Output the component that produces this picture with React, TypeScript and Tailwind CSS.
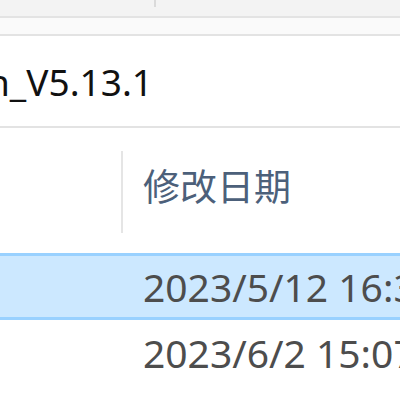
import React from "react";

export default function App() {
  const font = { fontFamily: '"Noto Sans", "Noto Sans CJK SC", sans-serif' };
  return (
    <div className="w-[400px] h-[400px] overflow-hidden bg-white flex flex-col" style={font}>
      <div className="h-[16px] bg-[#f3f3f3] flex shrink-0">
        <div className="w-[154px]" />
        <div className="w-[2px] h-[7px] bg-[#dadada]" />
      </div>
      <div className="h-[2px] bg-[#e3e3e3] shrink-0" />
      <div className="h-[16px] bg-[#fafafa] shrink-0" />
      <div className="h-[2px] bg-[#e3e3e3] shrink-0" />
      <div className="h-[90px] shrink-0 flex items-center overflow-hidden">
        <span className="ml-[-13px] text-[37px] leading-none text-[#111111] whitespace-nowrap">
          n_V5.13.1
        </span>
      </div>
      <div className="h-[2px] bg-[#e3e3e3] shrink-0" />
      <div className="h-[125px] shrink-0 flex">
        <div className="w-[121px]" />
        <div className="mt-[23px] w-[2px] h-[82px] bg-[#e5e5e5]" />
        <div className="ml-[20px] mt-[40px] text-[37px] leading-none text-[#4c607a] whitespace-nowrap">
          修改日期
        </div>
      </div>
      <div className="h-[67px] shrink-0 border-y-[3px] border-[#99d1ff] bg-[#cce8ff] flex items-center overflow-hidden">
        <span className="ml-[143px] text-[39px] leading-none text-[#4d4d4d] whitespace-nowrap">
          2023/5/12 16:30
        </span>
      </div>
      <div className="h-[65px] shrink-0 flex items-center overflow-hidden">
        <span className="ml-[143px] text-[39px] leading-none text-[#4d4d4d] whitespace-nowrap">
          2023/6/2 15:07
        </span>
      </div>
    </div>
  );
}
